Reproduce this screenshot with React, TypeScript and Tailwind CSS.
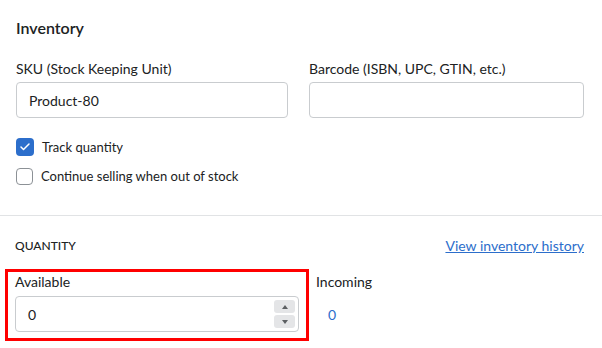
import { Check } from "lucide-react";

function Checkbox({ checked, label }: { checked?: boolean; label: string }) {
  return (
    <label className="flex h-[18px] items-center gap-[8px]">
      {checked ? (
        <span className="flex h-[18px] w-[18px] items-center justify-center rounded-[4px] bg-[#2c6ecb]">
          <Check className="h-[12px] w-[12px] text-white" strokeWidth={3} />
        </span>
      ) : (
        <span className="h-[17px] w-[17px] rounded-[4px] border border-[#8c9196] bg-white" />
      )}
      <span className="text-[13px] leading-5 text-[#202223]">{label}</span>
    </label>
  );
}

export default function App() {
  return (
    <div className="min-h-screen w-[602px] overflow-hidden bg-white font-['Lato','Noto_Sans',sans-serif] text-[#202223]">
      <div className="px-4 pt-4">
        <h2 className="text-[16px] font-semibold leading-6">Inventory</h2>
        <div className="mt-[19px] grid grid-cols-[272px_275px] gap-x-[21px]">
          <div>
            <p className="text-[14px] leading-5">SKU (Stock Keeping Unit)</p>
            <div className="mt-[3px] flex h-[36px] items-center rounded-[4px] border border-[#c9cccf] px-[12px] text-[14px]">
              Product-80
            </div>
          </div>
          <div>
            <p className="text-[14px] leading-5">Barcode (ISBN, UPC, GTIN, etc.)</p>
            <div className="mt-[3px] h-[36px] rounded-[4px] border border-[#c9cccf]" />
          </div>
        </div>
        <div className="mt-[20px] flex flex-col gap-[11px]">
          <Checkbox checked label="Track quantity" />
          <Checkbox label="Continue selling when out of stock" />
        </div>
      </div>
      <div className="mt-[30px] h-px bg-[#e1e3e5]" />
      <div className="px-[15px] pt-[20px]">
        <div className="flex items-center justify-between pr-[3px]">
          <p className="text-[12px] font-medium uppercase leading-5">Quantity</p>
          <a className="text-[14px] leading-5 text-[#2c6ecb] underline">View inventory history</a>
        </div>
        <div className="mt-[16px] grid grid-cols-[284px_1fr] gap-x-[17px]">
          <div className="relative">
            <div className="pointer-events-none absolute -left-[10px] -right-[10px] -top-[3px] -bottom-[9px] border-[3px] border-[#ff0000]" />
            <p className="text-[14px] leading-5">Available</p>
            <div className="mt-[4px] flex h-[36px] items-center justify-between rounded-[4px] border border-[#c9cccf] pl-[12px] pr-[3px] text-[14px]">
              <span>0</span>
              <div className="flex flex-col gap-[2px]">
                <span className="flex h-[13px] w-[21px] items-center justify-center rounded-[3px] bg-[#e4e5e7]">
                  <svg width="6" height="4" viewBox="0 0 6 4"><path d="M3 0L6 4H0z" fill="#5c5f62" /></svg>
                </span>
                <span className="flex h-[13px] w-[21px] items-center justify-center rounded-[3px] bg-[#e4e5e7]">
                  <svg width="6" height="4" viewBox="0 0 6 4"><path d="M0 0h6L3 4z" fill="#5c5f62" /></svg>
                </span>
              </div>
            </div>
          </div>
          <div>
            <p className="text-[14px] leading-5">Incoming</p>
            <div className="mt-[4px] flex h-[36px] items-center pl-[12px] text-[14px] text-[#2c6ecb]">0</div>
          </div>
        </div>
      </div>
    </div>
  );
}
